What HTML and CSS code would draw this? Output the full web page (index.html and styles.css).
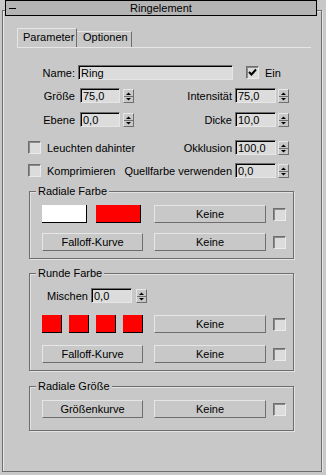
FILE: index.html
```html
<!DOCTYPE html>
<html lang="de">
<head>
    <meta charset="UTF-8">
    <title>Ringelement</title>
    <link rel="stylesheet" href="styles.css">
</head>
<body>

    <div class="rollout">
        <div class="rollout-title">
            <span class="collapse"></span>
            <span class="caption">Ringelement</span>
        </div>

        <div class="tabs">
            <div class="tab active">Parameter</div>
            <div class="tab">Optionen</div>
        </div>

        <div class="params">
            <div class="row row-1">
                <label class="lbl">Name:</label>
                <input class="edit edit-name" type="text" value="Ring">
                <span class="check check-ein">
                    <svg width="11" height="11" viewBox="0 0 11 11"><polyline points="2,5 4.5,7.5 9,2.5" fill="none" stroke="#000" stroke-width="2"/></svg>
                </span>
                <span class="check-text">Ein</span>
            </div>

            <div class="row row-2">
                <label class="lbl">Größe</label>
                <input class="edit num num-left" type="text" value="75,0">
                <span class="spin"><svg width="9" height="12" viewBox="0 0 9 12"><polygon points="2,5 7,5 4.5,2.5"/><line x1="0" y1="6.5" x2="9" y2="6.5" stroke="#6e6e6e"/><polygon points="2,8 7,8 4.5,10.5"/></svg></span>
                <div class="field-right">
                    <label>Intensität</label>
                    <input class="edit num" type="text" value="75,0">
                    <span class="spin"><svg width="9" height="12" viewBox="0 0 9 12"><polygon points="2,5 7,5 4.5,2.5"/><line x1="0" y1="6.5" x2="9" y2="6.5" stroke="#6e6e6e"/><polygon points="2,8 7,8 4.5,10.5"/></svg></span>
                </div>
            </div>

            <div class="row row-3">
                <label class="lbl">Ebene</label>
                <input class="edit num num-left" type="text" value="0,0">
                <span class="spin"><svg width="9" height="12" viewBox="0 0 9 12"><polygon points="2,5 7,5 4.5,2.5"/><line x1="0" y1="6.5" x2="9" y2="6.5" stroke="#6e6e6e"/><polygon points="2,8 7,8 4.5,10.5"/></svg></span>
                <div class="field-right">
                    <label>Dicke</label>
                    <input class="edit num" type="text" value="10,0">
                    <span class="spin"><svg width="9" height="12" viewBox="0 0 9 12"><polygon points="2,5 7,5 4.5,2.5"/><line x1="0" y1="6.5" x2="9" y2="6.5" stroke="#6e6e6e"/><polygon points="2,8 7,8 4.5,10.5"/></svg></span>
                </div>
            </div>

            <div class="row row-4">
                <span class="check check-left"></span>
                <span class="check-text">Leuchten dahinter</span>
                <div class="field-right">
                    <label>Okklusion</label>
                    <input class="edit num" type="text" value="100,0">
                    <span class="spin"><svg width="9" height="12" viewBox="0 0 9 12"><polygon points="2,5 7,5 4.5,2.5"/><line x1="0" y1="6.5" x2="9" y2="6.5" stroke="#6e6e6e"/><polygon points="2,8 7,8 4.5,10.5"/></svg></span>
                </div>
            </div>

            <div class="row row-5">
                <span class="check check-left"></span>
                <span class="check-text">Komprimieren</span>
                <div class="field-right">
                    <label>Quellfarbe verwenden</label>
                    <input class="edit num" type="text" value="0,0">
                    <span class="spin"><svg width="9" height="12" viewBox="0 0 9 12"><polygon points="2,5 7,5 4.5,2.5"/><line x1="0" y1="6.5" x2="9" y2="6.5" stroke="#6e6e6e"/><polygon points="2,8 7,8 4.5,10.5"/></svg></span>
                </div>
            </div>
        </div>

        <!-- Radiale Farbe -->
        <div class="group group-1">
            <div class="group-title">Radiale Farbe</div>
            <div class="grow">
                <div class="slot">
                    <span class="swatch swatch-wide white"></span>
                    <span class="swatch swatch-wide red"></span>
                </div>
                <button class="btn btn-map">Keine</button>
                <span class="check check-map"></span>
            </div>
            <div class="grow grow-gap10">
                <button class="btn btn-wide">Falloff-Kurve</button>
                <button class="btn btn-map">Keine</button>
                <span class="check check-map"></span>
            </div>
        </div>

        <!-- Runde Farbe -->
        <div class="group group-2">
            <div class="group-title">Runde Farbe</div>
            <div class="row mix-row">
                <label class="mix-lbl">Mischen</label>
                <input class="edit num" type="text" value="0,0">
                <span class="spin"><svg width="9" height="12" viewBox="0 0 9 12"><polygon points="2,5 7,5 4.5,2.5"/><line x1="0" y1="6.5" x2="9" y2="6.5" stroke="#6e6e6e"/><polygon points="2,8 7,8 4.5,10.5"/></svg></span>
            </div>
            <div class="grow grow-gap12">
                <div class="slot">
                    <span class="swatch swatch-small red"></span>
                    <span class="swatch swatch-small red"></span>
                    <span class="swatch swatch-small red"></span>
                    <span class="swatch swatch-small red"></span>
                </div>
                <button class="btn btn-map">Keine</button>
                <span class="check check-map"></span>
            </div>
            <div class="grow grow-gap12">
                <button class="btn btn-wide">Falloff-Kurve</button>
                <button class="btn btn-map">Keine</button>
                <span class="check check-map"></span>
            </div>
        </div>

        <!-- Radiale Größe -->
        <div class="group group-3">
            <div class="group-title">Radiale Größe</div>
            <div class="grow">
                <button class="btn btn-wide">Größenkurve</button>
                <button class="btn btn-map">Keine</button>
                <span class="check check-map"></span>
            </div>
        </div>
    </div>

</body>
</html>
```

FILE: styles.css
```css
* {
    box-sizing: border-box;
}

body {
    margin: 0;
    background-color: #c8c8c8;
    font-family: "Liberation Sans", Arial, sans-serif;
    font-size: 11px;
    color: #000;
}

/* rollout frame */
.rollout {
    margin: 10px 0 0 2px;
    width: 320px;
    padding-bottom: 40px;
    border: 1px solid #6e6e6e;
    box-shadow: inset 1px 1px 0 #e6e6e6, 1px 1px 0 #e6e6e6;
}

.rollout-title {
    display: flex;
    align-items: center;
    margin: -11px 0 0 2px;
    width: 312px;
    height: 16px;
    border: 1px solid #000;
    background-color: #b4b4b4;
}

.collapse {
    width: 7px;
    height: 1px;
    margin-left: 3px;
    background-color: #000;
}

.caption {
    flex: 1;
    text-align: center;
    margin-right: 10px;
    line-height: 14px;
}

/* tabs */
.tabs {
    display: flex;
    align-items: flex-end;
    margin: 12px 0 0 14px;
    width: 294px;
    height: 20px;
    border-bottom: 1px solid #e6e6e6;
}

.tab {
    height: 16px;
    width: 55px;
    padding-left: 6px;
    line-height: 11px;
    border-top: 1px solid #e6e6e6;
    border-right: 1px solid #6e6e6e;
    white-space: nowrap;
}

.tab.active {
    height: 19px;
    width: 60px;
    padding: 2px 0 0 5px;
    line-height: 13px;
    border-left: 1px solid #e6e6e6;
}

/* parameter rows */
.params {
    width: 286px;
}

.row {
    display: flex;
    align-items: center;
    height: 15px;
    white-space: nowrap;
}

.row-1 { margin-top: 17px; }
.row-2 { margin-top: 8px; }
.row-3 { margin-top: 9px; }
.row-4 { margin-top: 13px; }
.row-5 { margin-top: 8px; }

.lbl {
    width: 72px;
    text-align: right;
}

.edit {
    height: 15px;
    margin: 0;
    padding: 1px 0 0 2px;
    font: inherit;
    color: #000;
    background-color: #dcdcdc;
    border: 1px solid;
    border-color: #6e6e6e #e6e6e6 #e6e6e6 #6e6e6e;
    box-shadow: inset 1px 1px 0 #000;
    outline: none;
}

.edit-name {
    width: 155px;
    margin-left: 3px;
}

.num {
    width: 41px;
}

.num-left {
    width: 40px;
    margin-left: 5px;
}

.spin {
    display: flex;
    width: 11px;
    height: 14px;
    margin-left: 3px;
    border: 1px solid;
    border-color: #e6e6e6 #6e6e6e #6e6e6e #e6e6e6;
}

.field-right {
    display: flex;
    align-items: center;
    margin-left: auto;
}

.field-right label {
    margin-right: 3px;
}

.field-right .spin {
    margin-left: 2px;
}

.check {
    display: flex;
    align-items: center;
    justify-content: center;
    width: 13px;
    height: 13px;
    background-color: #dcdcdc;
    border: 1px solid;
    border-color: #6e6e6e #eaeaea #eaeaea #6e6e6e;
    box-shadow: inset 1px 1px 0 #8a8a8a;
}

.check-ein {
    margin-left: 13px;
}

.check-left {
    margin-left: 25px;
}

.check-text {
    margin-left: 6px;
}

/* groups */
.group {
    margin-left: 26px;
    width: 265px;
    padding: 0 0 7px 12px;
    border: 1px solid #6e6e6e;
    box-shadow: inset 1px 1px 0 #e2e2e2, 1px 1px 0 #e2e2e2;
}

.group-1 { margin-top: 13px; }
.group-2 { margin-top: 14px; }
.group-3 { margin-top: 15px; padding-bottom: 12px; }

.group-title {
    display: table;
    margin: -7px 0 7px -6px;
    padding: 0 2px;
    line-height: 13px;
    background-color: #c8c8c8;
}

.group-2 .group-title {
    margin-bottom: 8px;
}

.grow {
    display: flex;
    align-items: center;
    height: 18px;
}

.grow-gap10 { margin-top: 10px; }
.grow-gap12 { margin-top: 12px; }

.slot {
    display: flex;
    width: 101px;
    height: 18px;
    gap: 7px;
}

.group-1 .slot {
    gap: 9px;
}

.swatch {
    height: 18px;
    border-right: 1px solid #000;
    border-bottom: 1px solid #000;
}

.swatch-wide { width: 45px; }
.swatch-small { width: 20px; }

.white { background-color: #fff; }
.red { background-color: #ff0000; }

.btn {
    height: 18px;
    margin: 0;
    padding: 0;
    font: inherit;
    color: #000;
    background-color: #c8c8c8;
    border: 1px solid;
    border-color: #e6e6e6 #6e6e6e #6e6e6e #e6e6e6;
}

.btn-wide {
    width: 101px;
}

.btn-map {
    width: 112px;
    margin-left: 11px;
}

.check-map {
    margin-left: 7px;
}

.mix-row {
    padding-left: 5px;
}

.mix-lbl {
    width: 44px;
}

.mix-row .spin {
    margin-left: 4px;
}
```
